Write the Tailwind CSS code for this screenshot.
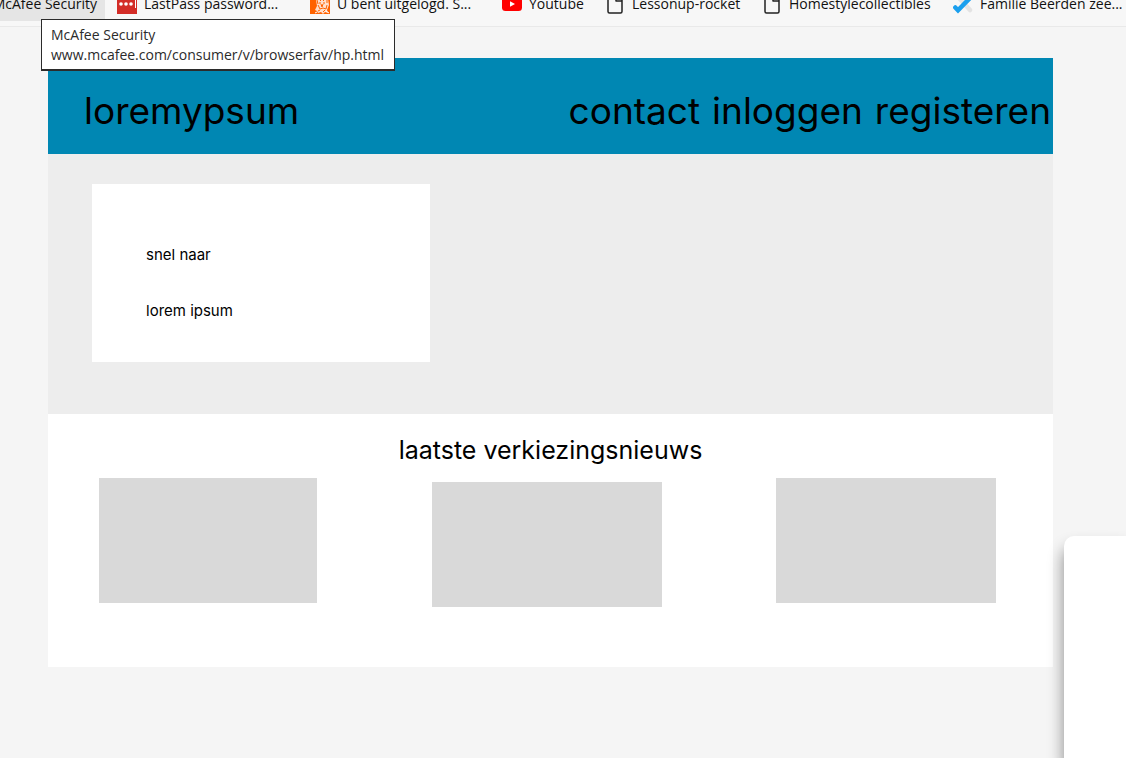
<!DOCTYPE html>
<html lang="nl">
<head>
<meta charset="utf-8">
<meta name="viewport" content="width=device-width, initial-scale=1">
<title>loremypsum</title>
<script src="https://cdn.jsdelivr.net/npm/@tailwindcss/browser@4"></script>
</head>
<body class="relative min-h-screen overflow-hidden bg-[#f5f5f5] font-['Inter',sans-serif] text-black">

<!-- Bookmarks bar -->
<nav aria-label="Favorieten" class="h-[27px] overflow-hidden border-b border-[#e9e9e9] bg-[#f7f7f7] font-['Open_Sans',sans-serif] text-sm text-[#111]">
  <div class="-mt-[13px] flex h-[34px] whitespace-nowrap">
    <a href="#" aria-describedby="tip" class="flex w-[105px] shrink-0 items-center justify-end bg-[#e5e5e5] pr-2">McAfee Security</a>
    <a href="#" class="flex w-[193px] shrink-0 items-center gap-[7px] pl-3">
      <svg class="size-5 shrink-0" viewBox="0 0 20 20"><rect width="20" height="20" fill="#d32d27"/><circle cx="4" cy="10" r="1.8" fill="#fff"/><circle cx="9" cy="10" r="1.8" fill="#fff"/><circle cx="14" cy="10" r="1.8" fill="#fff"/><path d="M18.500 6v8" stroke="#fff" stroke-width="1"/></svg>
      LastPass password...</a>
    <a href="#" class="flex w-[192px] shrink-0 items-center gap-[7px] pl-3">
      <svg class="size-5 shrink-0" viewBox="0 0 20 20"><rect width="20" height="20" fill="#ff6200"/><path d="M8 2c3-2 8-1 10 3l1 6-2 5 1 3-3-1-2 2-2-2-3 1-1-2-2-1 2-4-1-6z" fill="#fff" opacity=".8"/><path d="M9 5l2 2m4-2l-2 2m-4 2h2m2 0h2m-4 1l1 3 1-3m-5 1l2 4 3-1 3 1 1-4M8 17l2-1m3 2l2-2M7 6l1 4m9-5v4" stroke="#ff6200" stroke-width="1" fill="none"/><path d="M5 19l2-1m9-1l3 2" stroke="#fff"/></svg>
      U bent uitgelogd. S...</a>
    <a href="#" class="flex w-[103px] shrink-0 items-center gap-[7px] pl-3">
      <svg class="size-5 shrink-0" viewBox="0 0 20 20"><rect y="3" width="20" height="14" rx="3.5" fill="#f00"/><path d="M8 7.2v5.6l5-2.8z" fill="#fff"/></svg>
      Youtube</a>
    <a href="#" class="flex w-[157px] shrink-0 items-center gap-[7px] pl-3">
      <svg class="size-5 shrink-0" viewBox="0 0 20 20" fill="none" stroke="#222" stroke-width="1.5" stroke-linejoin="round"><path d="M5 1h7l5 5v11.5a1.5 1.5 0 0 1-1.5 1.5h-11A1.5 1.5 0 0 1 3 17.500V2.500A1.500 1.500 0 0 1 4.500 1z"/><path d="M11 1v6h6"/></svg>
      Lessonup-rocket</a>
    <a href="#" class="flex w-[191px] shrink-0 items-center gap-[7px] pl-3">
      <svg class="size-5 shrink-0" viewBox="0 0 20 20" fill="none" stroke="#222" stroke-width="1.5" stroke-linejoin="round"><path d="M5 1h7l5 5v11.5a1.5 1.5 0 0 1-1.5 1.5h-11A1.5 1.5 0 0 1 3 17.500V2.500A1.500 1.500 0 0 1 4.500 1z"/><path d="M11 1v6h6"/></svg>
      Homestylecollectibles</a>
    <a href="#" class="flex shrink-0 items-center gap-[7px] pl-3">
      <svg class="size-5 shrink-0" viewBox="0 0 20 20" fill="none" stroke-width="4.500" stroke-linecap="round"><path d="M7 5l10 11" stroke="#e3e3e3"/><path d="M2.300 13.500L5 16.300 17 4" stroke="#1a9fee"/></svg>
      Familie Beerden zee...</a>
  </div>
</nav>

<div id="tip" role="tooltip" class="absolute left-[41px] top-[19px] z-10 border border-b-2 border-[#2b2b2b] bg-white pt-[5px] pr-[10px] pb-1 pl-[9px] font-['Open_Sans',sans-serif] text-sm text-[#2b2b2b]">
  <p>McAfee Security</p>
  <p>www.mcafee.com/consumer/v/browserfav/hp.html</p>
</div>

<div class="mt-[31px] mr-[73px] ml-12 bg-white">
  <header class="flex h-24 items-center justify-between bg-[#0087b3] pt-[10px] pr-[2px] pl-9 text-[37px] whitespace-nowrap">
    <a href="#">loremypsum</a>
    <nav class="flex gap-3"><a href="#">contact</a><a href="#">inloggen</a><a href="#">registeren</a></nav>
  </header>
  <section class="bg-[#ededed] px-11 pt-[30px] pb-[52px]">
    <div class="flex h-[178px] w-[338px] flex-col gap-8 bg-white px-[54px] pt-[59px] text-[15px] leading-6">
      <p>snel naar</p>
      <p>lorem ipsum</p>
    </div>
  </section>
  <main class="px-[51px] pt-4 pb-[60px]">
    <h2 class="text-center text-[25px] leading-10">laatste verkiezingsnieuws</h2>
    <div class="mt-2 flex items-start justify-between pr-[6px]">
      <div class="h-[125px] w-[218px] bg-[#d9d9d9]"></div>
      <div class="mt-1 h-[125px] w-[230px] bg-[#d9d9d9]"></div>
      <div class="h-[125px] w-[220px] bg-[#d9d9d9]"></div>
    </div>
  </main>
</div>

<!-- Floating panel entering from the lower right corner -->
<aside class="absolute right-0 bottom-0 h-[222px] w-[62px] rounded-tl-[10px] bg-white shadow-[0_12px_16px_rgba(0,0,0,0.45)]"></aside>
</body>
</html>
